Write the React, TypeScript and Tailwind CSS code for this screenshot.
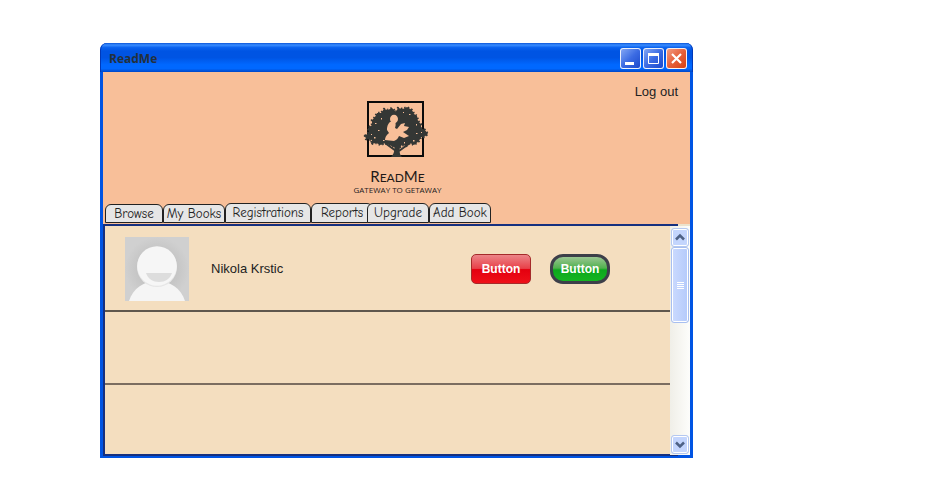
import { ReactNode } from "react";

const tabs = [
  { label: "Browse", size: "w-[58px] h-[19px]" },
  { label: "My Books", size: "w-[62px] h-[19px]" },
  { label: "Registrations", size: "w-[86px] h-5" },
  { label: "Reports", size: "w-[62px] h-5" },
  { label: "Upgrade", size: "w-[62px] h-5 -ml-[6px]" },
  { label: "Add Book", size: "w-[62px] h-5" },
];

function CaptionButton({ label, tone, children }: { label: string; tone: string; children: ReactNode }) {
  return (
    <button
      type="button"
      aria-label={label}
      className={`h-[21px] w-[21px] rounded-[3px] border border-white/90 bg-linear-to-br ${tone}`}
    >
      <svg viewBox="0 0 19 19" className="block h-full w-full" fill="none" stroke="white">
        {children}
      </svg>
    </button>
  );
}

function TitleBar() {
  return (
    <header className="flex h-[29px] items-center justify-between rounded-t-[7px] border-x border-[#0038b8] bg-[linear-gradient(#0b55d8_0%,#3a8dff_7%,#0a62ee_16%,#0054e3_28%,#0054e3_50%,#0068ff_75%,#0068ff_88%,#0047c8_100%)] pr-[5px] pl-2 pt-[2px]">
      <h1 className="font-['Trebuchet_MS','Open_Sans',sans-serif] text-[12px] leading-4 font-bold text-[#24303c]">ReadMe</h1>
      <div className="flex gap-[2px]">
        <CaptionButton label="Minimize" tone="from-[#83a5f3] via-[#3b6be3] to-[#1c49cc]">
          <path d="M4 14.5h9" strokeWidth="3" />
        </CaptionButton>
        <CaptionButton label="Maximize" tone="from-[#83a5f3] via-[#3b6be3] to-[#1c49cc]">
          <path d="M4.500 5v9.500h10V5" />
          <path d="M4 5.500h11" strokeWidth="3" />
        </CaptionButton>
        <CaptionButton label="Close" tone="from-[#f09a80] via-[#e6603a] to-[#d4400f]">
          <path d="M5 5l9 9M14 5l-9 9" strokeWidth="2.200" />
        </CaptionButton>
      </div>
    </header>
  );
}

function TreeLogo() {
  const canopy =
    "M4 39 8 35 7 31 11 28 11 23 14 20 16 16 20 16 23 12 27 13 31 11 35 15 37 11 42 12 46 10 51 13 53 17 56 19 57 24 60 27 60 31 64 33 67 37 63 40 60 40 58 44 53 48 49 46 45 49 41 48 39 50 33 50 28 48 24 46 20 48 15 46 10 47 11 43 5 42Z";
  return (
    <svg viewBox="0 0 72 64" className="h-16 w-[72px]" role="img" aria-label="Reader in a tree">
      <rect x="7" y="5" width="55" height="54" fill="none" stroke="#0b0b0b" strokeWidth="2" />
      <path d={canopy} fill="#343735" />
      <path d={canopy} fill="none" stroke="#343735" strokeWidth="2.400" strokeDasharray="1.500 2.200" />
      <path d="M33 47c1 6 0 10-3 13h11c-3-3-3-8-1-13Z" fill="#343735" />
      <path d="M35 54 24 46M38 54l11-8" stroke="#343735" strokeWidth="2" />
      <g fill="#f8bf99">
        <ellipse cx="33" cy="22" rx="4" ry="4.300" />
        <path d="M29 25c-3 3-3 6-3 8l2 3c-3 2-4 5-4 7l9 1c3-1 4-3 5-5l5 2 5-2-6-4 4-2 2-3-5-1 1-3-4 1-4 5-2-1c1-3 1-6-1-7Z" />
        <path d="M14 26h1.500v1H14zM20 21h1v1.500h-1zM48 17h1.500v1H48zM55 27h1v1.500h-1zM17 33h1.500v1H17zM55 36h1.500v1H55zM13 40h1.500v1.500H13zM22 43h1.500v1H22zM52 43h1.500v1.500H52zM43 45h1v1.500h-1zM10 37h1v1h-1zM60 35h1v1h-1zM42 15h1v1h-1z" />
      </g>
    </svg>
  );
}

function Banner() {
  return (
    <div className="flex h-[152px] flex-col justify-between bg-[#f8bf99]">
      <div className="grid grid-cols-[1fr_auto_1fr] pl-[2px]">
        <span />
        <div className="flex flex-col items-center pt-[25px] text-[#24201e]">
          <TreeLogo />
          <p className="pt-[7px] font-['Lato',sans-serif] text-[15px] leading-4 text-[#1d1a18]">
            R<span className="text-[12px]">EAD</span>M<span className="text-[12px]">E</span>
          </p>
          <p className="font-['Open_Sans',sans-serif] text-[8px] leading-2">GATEWAY TO GETAWAY</p>
        </div>
        <a href="#logout" className="justify-self-end pt-3 pr-3 text-[13px] leading-4 text-[#222]">
          Log out
        </a>
      </div>
      <nav aria-label="Sections" className="flex items-end pb-px pl-[2px]">
        {tabs.map((tab) => (
          <button
            key={tab.label}
            type="button"
            className={`${tab.size} flex justify-center rounded-t-[6px] border border-[#222] bg-[#e6e6e6] pt-px font-['Comic_Sans_MS','Comic_Neue','Comic_Relief',cursive] text-[13px] leading-4 whitespace-nowrap text-[#222]`}
          >
            {tab.label}
          </button>
        ))}
      </nav>
    </div>
  );
}

function Avatar() {
  return (
    <svg viewBox="0 0 64 64" className="h-16 w-16" role="img" aria-label="Nikola Krstic">
      <defs>
        <radialGradient id="backdrop">
          <stop offset="0.500" stopColor="#c2c2c2" />
          <stop offset="1" stopColor="#d0d0d0" />
        </radialGradient>
      </defs>
      <rect width="64" height="64" fill="url(#backdrop)" />
      <path d="M4 64C8 51 19 44 32 44s24 7 28 20Z" fill="#f5f5f5" />
      <circle cx="32" cy="30" r="20" fill="#e6e6e6" />
      <circle cx="32" cy="29" r="19.800" fill="#f6f6f6" />
      <path d="M21 36h26c-2 6-7 9-13 9s-11-3-13-9Z" fill="#dddddd" />
    </svg>
  );
}

function UserRow() {
  return (
    <li className="flex items-center border-b-2 border-[#5f574d] pt-[11px] pr-[60px] pb-[9px] pl-5">
      <Avatar />
      <span className="pl-[22px] text-[13px] leading-4">Nikola Krstic</span>
      <div className="ml-auto flex gap-[19px] text-[12px] font-bold text-white text-shadow-[0_1px_1px_#000a]">
        <button
          type="button"
          className="h-[30px] w-[60px] rounded-[5px] border border-[#a52a2a] bg-[linear-gradient(#ec8488_0%,#e84048_48%,#e4000f_52%,#ee1018_100%)]"
        >
          Button
        </button>
        <button
          type="button"
          className="h-[30px] w-[60px] rounded-[13px] border-3 border-[#3d3f49] bg-[linear-gradient(#9ac692_0%,#51b14f_46%,#0ca81c_54%,#16b522_100%)]"
        >
          Button
        </button>
      </div>
    </li>
  );
}

function ScrollArrow({ label, d }: { label: string; d: string }) {
  return (
    <button
      type="button"
      aria-label={label}
      className="h-[19px] w-[18px] shrink-0 rounded-[3px] border border-[#b4c8f0] bg-[#c3d5fd] shadow-[inset_0_0_0_1px_white]"
    >
      <svg viewBox="0 0 16 17" className="block h-full w-full" fill="none" stroke="#4d6185" strokeWidth="2.500">
        <path d={d} />
      </svg>
    </button>
  );
}

function ScrollBar() {
  return (
    <div className="flex w-5 flex-col items-center bg-linear-to-r from-[#f0efe8] to-[#fdfdfb]">
      <div className="h-[2px] w-full border-r-12 border-[#ece2cc] bg-[#16307f]" />
      <div className="h-[2px] w-full shrink-0" />
      <ScrollArrow label="Scroll up" d="M4 10.500 8 6.500l4 4" />
      <div className="flex h-[76px] w-[18px] flex-col items-center justify-center gap-px rounded-[3px] border border-[#a8bff0] bg-linear-to-r from-[#cbdafe] to-[#b4cafb] shadow-[inset_0_0_0_1px_white]">
        <i className="h-px w-[7px] bg-white" />
        <i className="h-px w-[7px] bg-white" />
        <i className="h-px w-[7px] bg-white" />
        <i className="h-px w-[7px] bg-white" />
      </div>
      <div className="grow" />
      <ScrollArrow label="Scroll down" d="M4 6.500l4 4 4-4" />
      <div className="h-px w-full shrink-0" />
      <div className="h-px w-full shrink-0 border-r-12 border-[#0054e3] bg-[#16307f]" />
    </div>
  );
}

export default function App() {
  return (
    <main className="bg-white pt-[43px] pr-[250px] pl-[100px] font-['Liberation_Sans',Arial,sans-serif] text-[#222]">
      <section className="rounded-t-[7px] bg-[#0054e3] pb-[2px]">
        <TitleBar />
        <div className="mx-[3px]">
          <Banner />
          <div className="flex">
            <ul className="grow border-2 border-r-0 border-[#16307f] bg-[#f4debf]">
              <UserRow />
              <li className="h-[73px] border-b-2 border-[#7b6d60]" />
              <li className="h-[69px]" />
            </ul>
            <ScrollBar />
          </div>
        </div>
      </section>
    </main>
  );
}
